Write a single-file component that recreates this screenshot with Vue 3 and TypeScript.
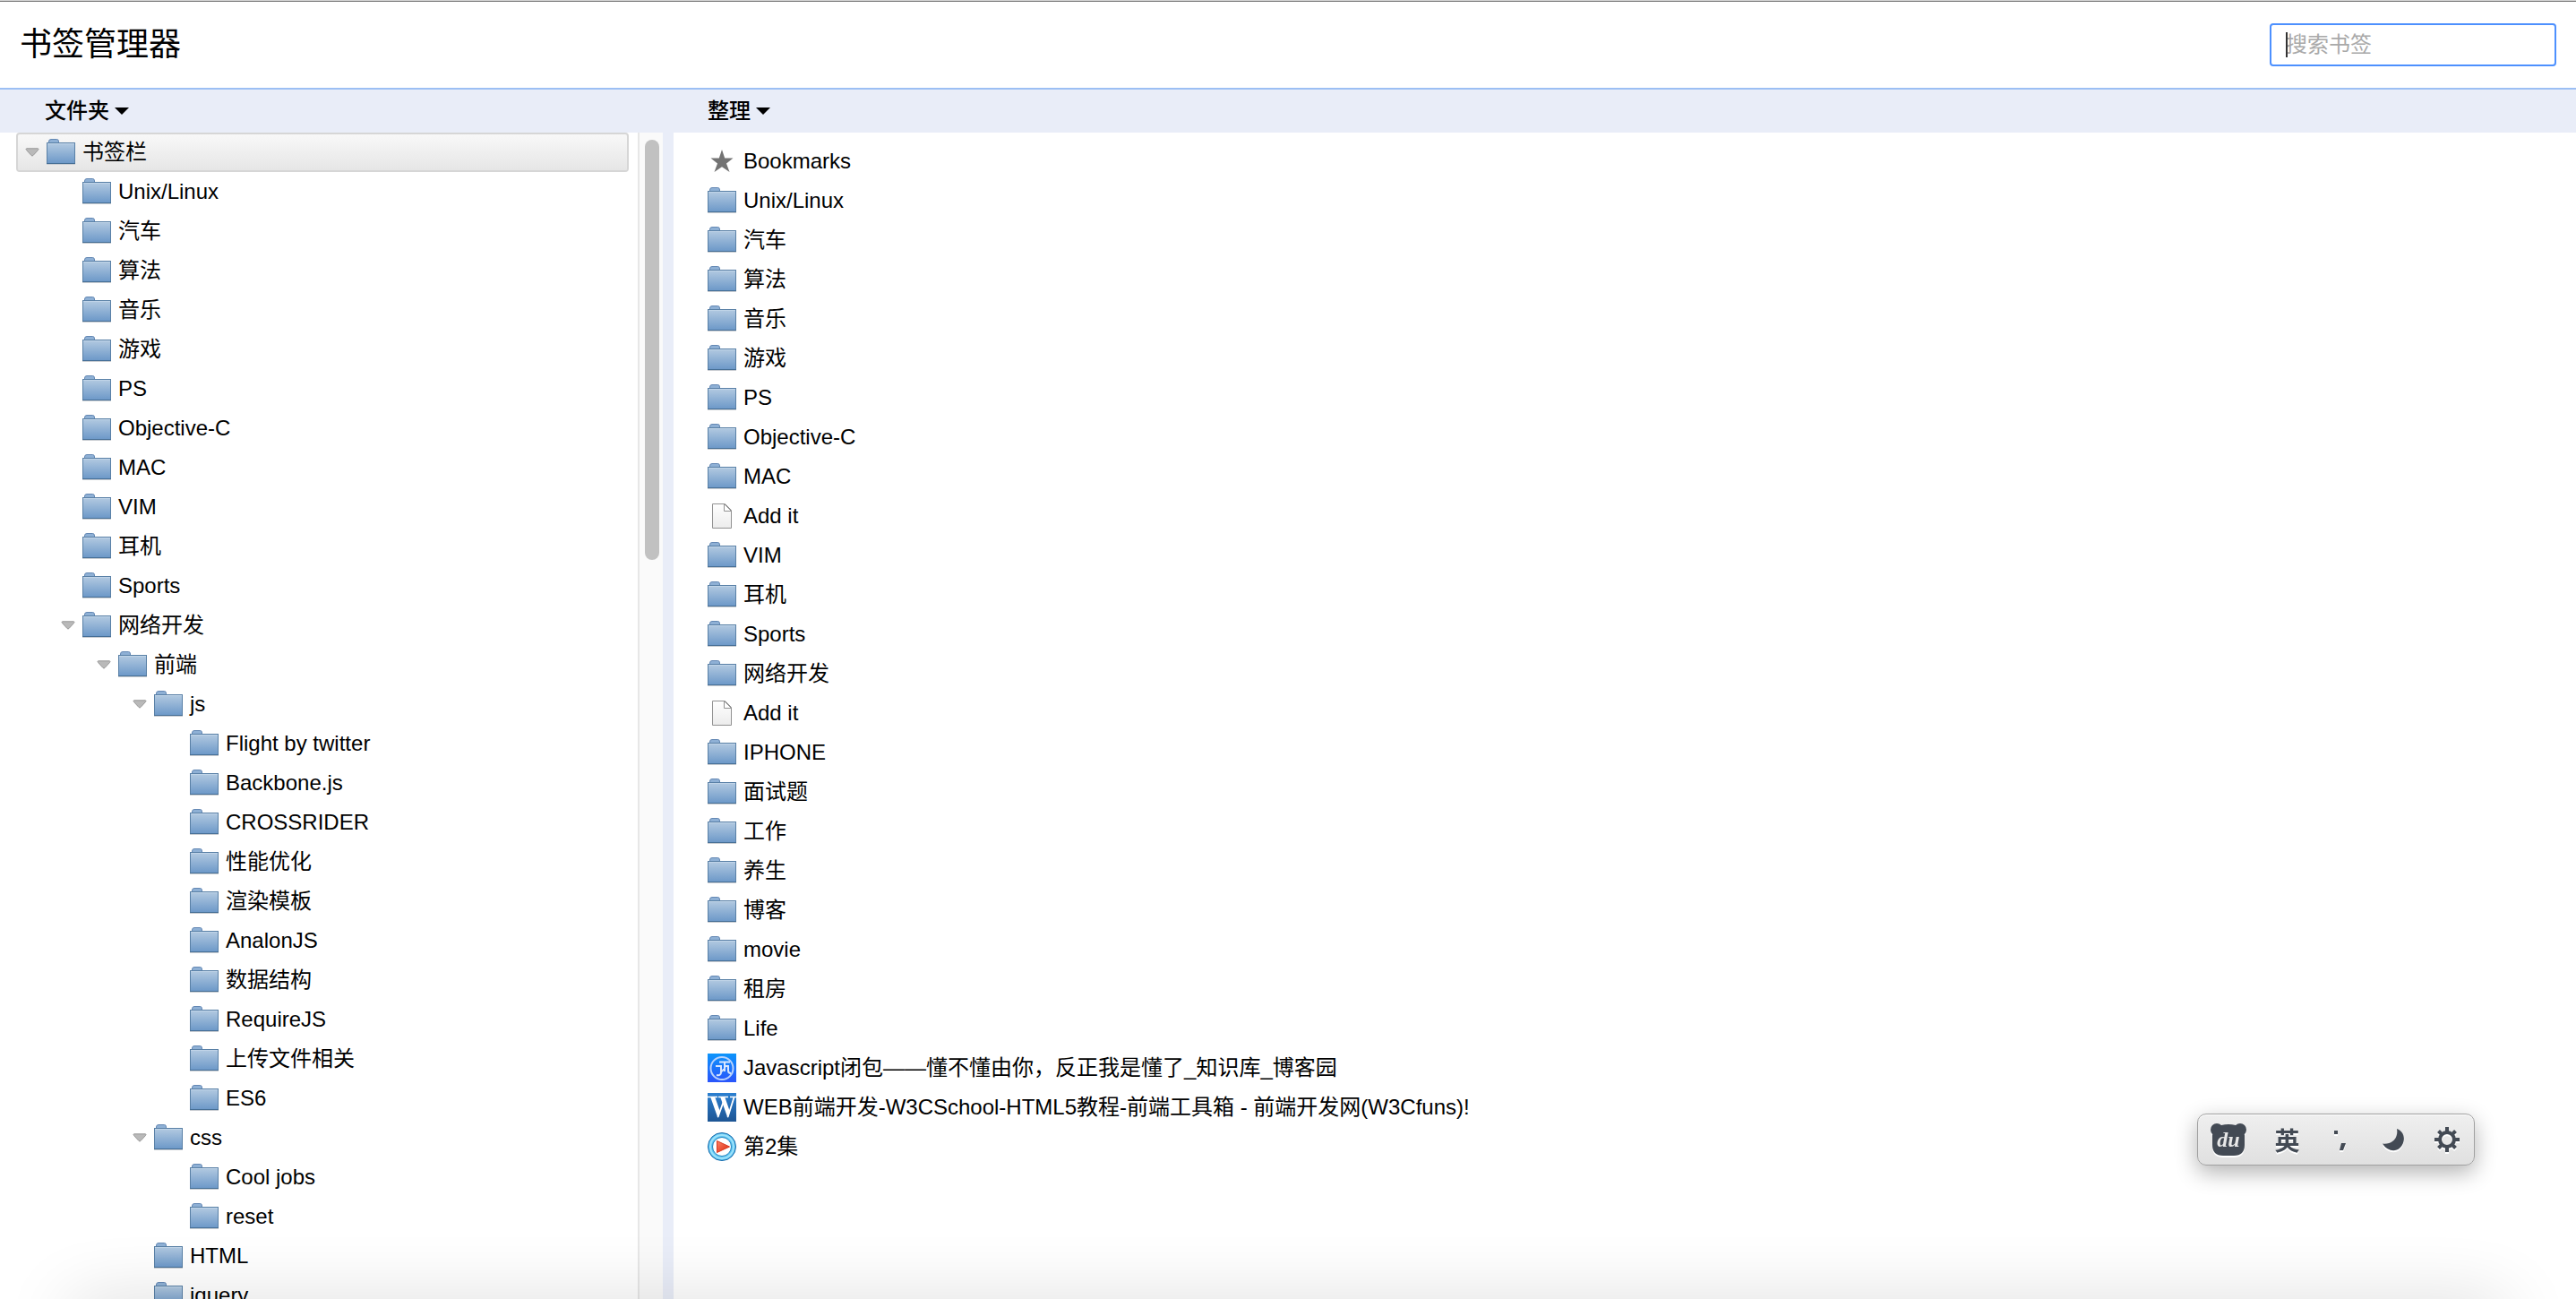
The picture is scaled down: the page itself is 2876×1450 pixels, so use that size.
<script setup lang="ts">
interface TreeNode {
  label: string
  level: number
  open?: boolean
  selected?: boolean
}

interface Item {
  label: string
  icon: 'folder' | 'page' | 'star' | 'blog' | 'w3c' | 'play'
}

const tree: TreeNode[] = [
  { label: '书签栏', level: 0, open: true, selected: true },
  { label: 'Unix/Linux', level: 1 },
  { label: '汽车', level: 1 },
  { label: '算法', level: 1 },
  { label: '音乐', level: 1 },
  { label: '游戏', level: 1 },
  { label: 'PS', level: 1 },
  { label: 'Objective-C', level: 1 },
  { label: 'MAC', level: 1 },
  { label: 'VIM', level: 1 },
  { label: '耳机', level: 1 },
  { label: 'Sports', level: 1 },
  { label: '网络开发', level: 1, open: true },
  { label: '前端', level: 2, open: true },
  { label: 'js', level: 3, open: true },
  { label: 'Flight by twitter', level: 4 },
  { label: 'Backbone.js', level: 4 },
  { label: 'CROSSRIDER', level: 4 },
  { label: '性能优化', level: 4 },
  { label: '渲染模板', level: 4 },
  { label: 'AnalonJS', level: 4 },
  { label: '数据结构', level: 4 },
  { label: 'RequireJS', level: 4 },
  { label: '上传文件相关', level: 4 },
  { label: 'ES6', level: 4 },
  { label: 'css', level: 3, open: true },
  { label: 'Cool jobs', level: 4 },
  { label: 'reset', level: 4 },
  { label: 'HTML', level: 3 },
  { label: 'jquery', level: 3 },
]

const folder = (label: string): Item => ({ label, icon: 'folder' })

const items: Item[] = [
  { label: 'Bookmarks', icon: 'star' },
  ...['Unix/Linux', '汽车', '算法', '音乐', '游戏', 'PS', 'Objective-C', 'MAC'].map(folder),
  { label: 'Add it', icon: 'page' },
  ...['VIM', '耳机', 'Sports', '网络开发'].map(folder),
  { label: 'Add it', icon: 'page' },
  ...['IPHONE', '面试题', '工作', '养生', '博客', 'movie', '租房', 'Life'].map(folder),
  { label: 'Javascript闭包——懂不懂由你，反正我是懂了_知识库_博客园', icon: 'blog' },
  { label: 'WEB前端开发-W3CSchool-HTML5教程-前端工具箱 - 前端开发网(W3Cfuns)!', icon: 'w3c' },
  { label: '第2集', icon: 'play' },
]
</script>

<template>
  <svg class="defs" aria-hidden="true">
    <defs>
      <linearGradient id="g-folder" x1="0" y1="0" x2="0" y2="1">
        <stop offset="0" stop-color="#b3cae1" />
        <stop offset="1" stop-color="#6c98c8" />
      </linearGradient>
      <linearGradient id="g-page" x1="0" y1="0" x2="0" y2="1">
        <stop offset="0" stop-color="#ffffff" />
        <stop offset="1" stop-color="#ececec" />
      </linearGradient>
      <linearGradient id="g-blog" x1="0" y1="0" x2="0" y2="1">
        <stop offset="0" stop-color="#0d95fb" />
        <stop offset="1" stop-color="#2a54fb" />
      </linearGradient>
      <linearGradient id="g-w3c" x1="0" y1="0" x2="0" y2="1">
        <stop offset="0" stop-color="#2b7fd0" />
        <stop offset="1" stop-color="#1d5594" />
      </linearGradient>
      <linearGradient id="g-play" x1="0" y1="0" x2="1" y2="1">
        <stop offset="0" stop-color="#fb8468" />
        <stop offset="1" stop-color="#dc2408" />
      </linearGradient>
      <symbol id="i-folder" viewBox="0 0 32 32">
        <path d="M2.5 6V4Q2.500 1.500 5 1.500h6.500q2 0 2 2.500v2" fill="#8eb0d5" stroke="#6488b4" />
        <path d="M0 29.500h32" stroke="#c9cdd2" />
        <rect x="0.500" y="5.500" width="31" height="23" fill="url(#g-folder)" stroke="#5980a6" />
        <path d="M1 6.500h30" stroke="#c0d4e8" />
        <path d="M0 28.500h32" stroke="#466f96" />
      </symbol>
      <symbol id="i-page" viewBox="0 0 32 32">
        <path d="M5.500 2.500h14l7 7v20h-21z" fill="url(#g-page)" stroke="#929292" />
        <path d="M18.500 2.500v8h8z" fill="#fff" stroke="#929292" />
      </symbol>
      <symbol id="i-star" viewBox="0 0 32 32">
        <path d="M16 3l3.200 9.500H28.500L21 18.500 24.500 28 16 22.200 7.500 28 11 18.500 3.500 12.500h9.300z" fill="#737373" />
      </symbol>
      <symbol id="i-blog" viewBox="0 0 32 32">
        <rect width="32" height="32" fill="url(#g-blog)" />
        <circle cx="16" cy="16.500" r="12.500" fill="none" stroke="#b9d3fd" stroke-width="2" />
        <path d="M13 9.500h12M9 14h6v7q0 4-5 3M19 10v10M18 14h5v5q0 3 3 3M20 15l-4 5" fill="none" stroke="#d9e7fe" stroke-width="2" />
      </symbol>
      <symbol id="i-w3c" viewBox="0 0 32 32">
        <rect width="32" height="32" fill="url(#g-w3c)" />
        <path d="M0 4.500h11M12 4.500h11M25 4.500h7" stroke="#fff" stroke-width="1.500" />
        <path d="M3 4h5l6 17-2.500 7zM14 4h5l6 17-2.500 7z" fill="#fff" />
        <path d="M11.500 27L18 9M22.500 27L29.500 5" stroke="#fff" stroke-width="1.800" />
      </symbol>
      <symbol id="i-play" viewBox="0 0 32 32">
        <circle cx="16" cy="16" r="15.500" fill="#5cc5f3" stroke="#1868a8" />
        <circle cx="16" cy="16" r="13" fill="none" stroke="#9ce2fb" stroke-width="2" />
        <circle cx="16" cy="16" r="10.500" fill="#fff" stroke="#2383bd" />
        <path d="M10.500 9.500L24.500 16l-14 6.500z" fill="url(#g-play)" stroke="#d83a20" />
      </symbol>
    </defs>
  </svg>

  <div class="page">
    <header class="header">
      <h1 class="title">书签管理器</h1>
      <label class="search">
        <input class="search-input" type="search" placeholder="搜索书签" aria-label="搜索书签" />
        <span class="caret"></span>
      </label>
    </header>

    <div class="toolbar">
      <div class="toolbar-left">
        <button class="menu" type="button">文件夹<span class="tri"></span></button>
      </div>
      <button class="menu" type="button">整理<span class="tri"></span></button>
    </div>

    <main class="body">
      <nav class="tree" aria-label="文件夹">
        <ul class="rows">
          <li
            v-for="(node, i) in tree"
            :key="i"
            class="row"
            :class="['level-' + node.level, { selected: node.selected }]"
          >
            <span class="twisty">
              <svg v-if="node.open" width="16" height="10" viewBox="0 0 16 10">
                <path d="M1.500 0.800h13q1 0.700 0 1.700L9 8.500q-1 1-2 0L1.500 2.500q-1-1 0-1.700z" fill="#b9b9b9" stroke="#989898" />
              </svg>
            </span>
            <svg class="icon"><use href="#i-folder" /></svg>
            <span class="label">{{ node.label }}</span>
          </li>
        </ul>
      </nav>
      <div class="track"><div class="thumb"></div></div>
      <div class="splitter"></div>
      <ul class="rows list">
        <li v-for="(item, i) in items" :key="i" class="row">
          <svg class="icon"><use :href="'#i-' + item.icon" /></svg>
          <span class="label">{{ item.label }}</span>
        </li>
      </ul>
    </main>

    <div class="floor-shadow"></div>

    <div class="ime">
      <button class="ime-button" type="button" aria-label="输入法">
        <svg width="40" height="38" viewBox="0 0 40 38">
          <g fill="#434a54">
            <circle cx="7" cy="8" r="7" />
            <circle cx="33" cy="8" r="7" />
            <path d="M2 14Q5 4 12 3q8-2 16 0 7 1 10 11v11q0 12-12 12H14Q2 37 2 25z" />
          </g>
          <text x="20" y="27" text-anchor="middle" class="du">du</text>
        </svg>
      </button>
      <button class="ime-button lang" type="button">英</button>
      <button class="ime-button" type="button" aria-label="标点">
        <svg width="28" height="28" viewBox="0 0 28 28" fill="#434a54">
          <path d="M7 4h4v4H7zM15 18h5l-3 8h-4z" />
        </svg>
      </button>
      <button class="ime-button" type="button" aria-label="夜间">
        <svg width="28" height="28" viewBox="0 0 28 28" fill="#434a54">
          <path d="M18 2C24 4 27 10 25.500 16 23 28 9 30 2 18.500 12 20 20 13 18 2z" />
        </svg>
      </button>
      <button class="ime-button" type="button" aria-label="设置">
        <svg width="28" height="28" viewBox="0 0 28 28" fill="none" stroke="#434a54">
          <circle cx="14" cy="14" r="8" stroke-width="4" />
          <path d="M14 0v5M14 23v5M0 14h5M23 14h5M4.500 4.500l3 3M20.500 20.500l3 3M4.500 23.500l3-3M20.500 7.500l3-3" stroke-width="4" />
        </svg>
      </button>
    </div>
  </div>
</template>

<style>
body {
  margin: 0;
  background: #fff;
}
</style>

<style scoped>
.defs {
  position: absolute;
  width: 0;
  height: 0;
}
.page {
  position: relative;
  display: flex;
  flex-direction: column;
  box-sizing: border-box;
  height: 100vh;
  overflow: hidden;
  border-top: 1px solid #d4d4d4;
  background: #fff;
  color: #000;
  font: 24px/40px "Liberation Sans", "Noto Sans CJK SC", sans-serif;
}
.header {
  display: flex;
  align-items: center;
  justify-content: space-between;
  flex: none;
  box-sizing: border-box;
  height: 99px;
  padding: 0 22px;
  border-top: 1px solid #777;
  border-bottom: 2px solid #9cbff4;
}
.title {
  margin: 0;
  font-size: 36px;
  line-height: 48px;
  font-weight: 400;
}
.search {
  position: relative;
  display: block;
}
.search-input {
  display: block;
  box-sizing: border-box;
  width: 320px;
  height: 48px;
  padding: 0 16px;
  border: 2px solid #4d90fe;
  border-radius: 4px;
  outline: none;
  background: #fff;
  color: #000;
  font: inherit;
  line-height: 40px;
  appearance: none;
}
.search-input::placeholder {
  color: #a9a9a9;
}
.caret {
  position: absolute;
  top: 10px;
  left: 18px;
  width: 2px;
  height: 28px;
  background: #333;
}
.toolbar {
  display: flex;
  align-items: center;
  flex: none;
  height: 48px;
  background: #e9edf8;
}
.toolbar-left {
  box-sizing: border-box;
  width: 740px;
  padding-left: 50px;
}
.menu {
  display: flex;
  align-items: center;
  gap: 6px;
  padding: 0;
  border: 0;
  background: none;
  color: #000;
  font: inherit;
  font-weight: 500;
}
.toolbar > .menu {
  margin-left: 50px;
}
.tri {
  border: 8px solid transparent;
  border-top-color: #000;
  border-bottom: 0;
}
.body {
  display: flex;
  flex: 1;
  min-height: 0;
}
.tree {
  box-sizing: border-box;
  width: 712px;
  padding: 0 10px 0 18px;
  overflow: hidden;
}
.rows {
  margin: 0;
  padding: 0;
  list-style: none;
}
.row {
  display: flex;
  align-items: center;
  box-sizing: border-box;
  height: 44px;
  border: 2px solid transparent;
  border-radius: 4px;
}
.selected {
  border-color: #d6d6d6;
  background: linear-gradient(#f8f8f8, #e6e6e6) padding-box;
}
.level-1 {
  padding-left: 40px;
}
.level-2 {
  padding-left: 80px;
}
.level-3 {
  padding-left: 120px;
}
.level-4 {
  padding-left: 160px;
}
.twisty {
  display: flex;
  flex: none;
  box-sizing: border-box;
  width: 32px;
  padding-left: 8px;
}
.icon {
  flex: none;
  width: 32px;
  height: 32px;
}
.label {
  margin-left: 8px;
  white-space: nowrap;
}
.track {
  box-sizing: border-box;
  width: 28px;
  padding: 8px 4px 8px 6px;
  border-left: 2px solid #e7e7e7;
  background: #fafafa;
}
.thumb {
  height: 36.5%;
  border-radius: 8px;
  background: #c1c1c1;
}
.splitter {
  width: 12px;
  background: #e9edf8;
}
.list {
  flex: 1;
  min-width: 0;
  padding: 10px 36px;
}
.floor-shadow {
  position: absolute;
  right: 80px;
  bottom: -40px;
  left: 80px;
  height: 40px;
  box-shadow: 0 8px 80px rgba(0, 0, 0, 0.2);
  pointer-events: none;
}
.ime {
  position: absolute;
  right: 113px;
  bottom: 149px;
  display: flex;
  align-items: center;
  justify-content: space-between;
  box-sizing: border-box;
  width: 310px;
  height: 58px;
  padding: 0 16px 0 14px;
  border: 1px solid #a0a0a0;
  border-radius: 10px;
  background: linear-gradient(#efefef, #e0e0e0);
  box-shadow: 0 8px 24px rgba(0, 0, 0, 0.3), inset 0 1px 0 #fff;
}
.ime-button {
  display: flex;
  padding: 0;
  border: 0;
  background: none;
  filter: drop-shadow(0 2px 0 #fff);
}
.lang {
  color: #434a54;
  font: 700 28px/32px "Noto Sans CJK SC", sans-serif;
}
.du {
  fill: #e8e8e8;
  font: italic 700 24px "Liberation Serif", serif;
}
</style>
